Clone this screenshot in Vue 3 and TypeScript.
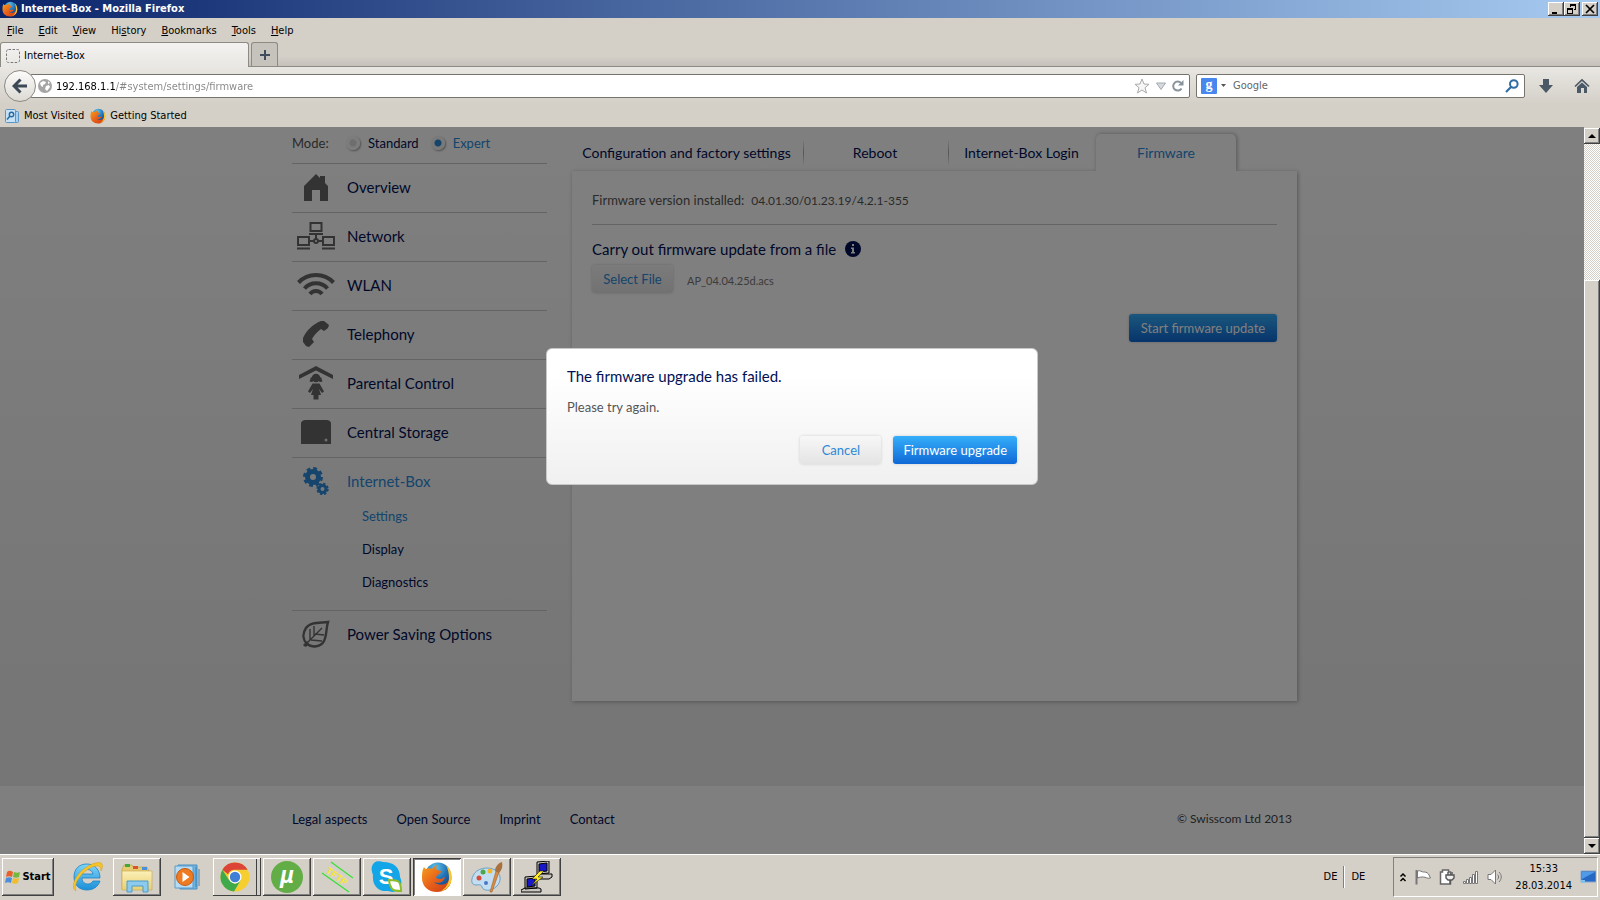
<script setup lang="ts">
import { ref } from 'vue'

interface NavItem { label: string; icon: string; active?: boolean; children?: string[] }

const menus = ['File', 'Edit', 'View', 'History', 'Bookmarks', 'Tools', 'Help']
const keyIndex: Record<string, number> = { History: 2 }
const nav: NavItem[] = [
  { label: 'Overview', icon: 'house' },
  { label: 'Network', icon: 'network' },
  { label: 'WLAN', icon: 'wifi' },
  { label: 'Telephony', icon: 'phone' },
  { label: 'Parental Control', icon: 'parental' },
  { label: 'Central Storage', icon: 'storage' },
  { label: 'Internet-Box', icon: 'gears', active: true, children: ['Settings', 'Display', 'Diagnostics'] },
  { label: 'Power Saving Options', icon: 'leaf' },
]
const tabs = ['Configuration and factory settings', 'Reboot', 'Internet-Box Login', 'Firmware']
const activeTab = ref('Firmware')
const mode = ref('Expert')
const url = ref('192.168.1.1/#system/settings/firmware')
const query = ref('')
const footerLinks = ['Legal aspects', 'Open Source', 'Imprint', 'Contact']
const apps = [
  { id: 'ie', label: 'Internet Explorer', state: 'flat' },
  { id: 'explorer', label: 'Windows Explorer', state: '' },
  { id: 'wmp', label: 'Media Player', state: 'flat' },
  { id: 'chrome', label: 'Chrome', state: 'stacked' },
  { id: 'utorrent', label: 'uTorrent', state: '' },
  { id: 'tftp', label: 'TFTP', state: '' },
  { id: 'skype', label: 'Skype', state: '' },
  { id: 'firefox', label: 'Firefox', state: 'pressed' },
  { id: 'paint', label: 'Paint', state: '' },
  { id: 'putty', label: 'PuTTY', state: '' },
]
</script>

<template>
  <div class="screen">
    <svg class="defs" aria-hidden="true">
      <defs>
        <linearGradient id="foxTail" x1="0" y1="0" x2="1" y2="1">
          <stop offset="0" stop-color="#f6a21d" /><stop offset=".5" stop-color="#e8601a" /><stop offset="1" stop-color="#c83a12" />
        </linearGradient>
        <radialGradient id="foxGlobe" cx=".4" cy=".2" r=".9">
          <stop offset="0" stop-color="#5cc4ea" /><stop offset=".5" stop-color="#2272b8" /><stop offset="1" stop-color="#123a78" />
        </radialGradient>
        <linearGradient id="ieBlue" x1="0" y1="0" x2="0" y2="1">
          <stop offset="0" stop-color="#7fd4f8" /><stop offset="1" stop-color="#1b8fd8" />
        </linearGradient>
        <linearGradient id="folder" x1="0" y1="0" x2="0" y2="1">
          <stop offset="0" stop-color="#fbf0b8" /><stop offset="1" stop-color="#e8cf72" />
        </linearGradient>
        <symbol id="fox" viewBox="0 0 32 32">
          <circle cx="17" cy="14.500" r="13" fill="url(#foxGlobe)" />
          <path d="M3 6c1 1 1 2 2 2 2-1 4-1 6 0 1-2 3-3 5-4-1 2-1 4 0 5l4 1c0 2-1 3-4 4l-1 3c3 2 6 1 9-1-1 5-6 7-11 5 4 4 12 4 15-2 1-3 1-8-1-11 3 3 4 8 3 12-1 7-7 11-14 11C7 31 1 25 1 17 1 13 1 9 3 6z" fill="url(#foxTail)" />
          <path d="M25 4c5 4 7 11 5 17-1 4-5 8-10 9 5-3 8-8 8-13 0-5-1-9-3-13z" fill="#fbc531" />
        </symbol>
      </defs>
    </svg>

    <header class="titlebar">
      <svg class="i16" aria-hidden="true"><use href="#fox" /></svg>
      <span class="title">Internet-Box - Mozilla Firefox</span>
      <div class="winbtns">
        <button aria-label="Minimize"><svg viewBox="0 0 10 10"><path d="M1 8h5v2H1z" /></svg></button>
        <button aria-label="Restore"><svg viewBox="0 0 10 10"><path d="M3 0h6v6H7V5h1V2H4v1H3zM0 4h6v6H0zM1 6v3h4V6z" fill-rule="evenodd" /></svg></button>
        <button class="close" aria-label="Close"><svg viewBox="0 0 10 10"><path d="M1 1l8 8M9 1L1 9" stroke="#000" stroke-width="1.700" /></svg></button>
      </div>
    </header>

    <nav class="menubar" aria-label="Menu">
      <button v-for="m in menus" :key="m">{{ m.slice(0, keyIndex[m] ?? 0) }}<u>{{ m[keyIndex[m] ?? 0] }}</u>{{ m.slice((keyIndex[m] ?? 0) + 1) }}</button>
    </nav>

    <div class="tabstrip">
      <button class="btab">
        <svg class="i14" viewBox="0 0 14 14" aria-hidden="true"><rect x=".5" y=".5" width="13" height="13" rx="2" fill="none" stroke="#777" stroke-dasharray="2.500 1.500" /></svg>
        <span>Internet-Box</span>
      </button>
      <button class="newtab" aria-label="New tab"><svg viewBox="0 0 10 10"><path d="M5 0v10M0 5h10" stroke="#3f4d5c" stroke-width="2" /></svg></button>
    </div>

    <div class="toolbar">
      <button class="back" aria-label="Back"><svg viewBox="0 0 16 16"><path d="M8.500 1.500L2 8l6.500 6.500M2 8h13" fill="none" stroke="#3c4856" stroke-width="3" /></svg></button>
      <div class="field address">
        <svg class="i14" viewBox="0 0 14 14" aria-hidden="true"><circle cx="7" cy="7" r="7" fill="#a5a5a5" /><path d="M2 4l3-2 3 1-1 2-2 1v2L3 7zM8 7l3-1 1 2-3 4-2-2zM10 2l2 2-2 1z" fill="#fff" /></svg>
        <input v-model="url" class="url" aria-label="Address" />
        <button aria-label="Bookmark"><svg class="i16" viewBox="0 0 16 16"><path d="M8 1l2 5 5 .3-4 3.400L12.500 15 8 12l-4.500 3L5 9.700 1 6.300 6 6z" fill="#f6f6f6" stroke="#aaa" /></svg></button>
        <button aria-label="History"><svg class="i10" viewBox="0 0 10 8"><path d="M.5 1h9L5 7.500z" fill="#d6d9de" stroke="#a4a9b2" /></svg></button>
        <button aria-label="Reload"><svg class="i12" viewBox="0 0 12 12"><path d="M9.500 8.500A4.500 4.500 0 1 1 9 3" fill="none" stroke="#8a929c" stroke-width="2" /><path d="M11.500 0v5.500H6z" fill="#8a929c" /></svg></button>
      </div>
      <div class="field search">
        <svg class="i16" viewBox="0 0 16 16" aria-hidden="true"><rect width="16" height="16" rx="1" fill="#4787ee" /><text x="8" y="11" class="g">g</text></svg>
        <svg class="caret" viewBox="0 0 5 3" aria-hidden="true"><path d="M0 0h5L2.500 3z" fill="#555" /></svg>
        <input v-model="query" placeholder="Google" aria-label="Search" />
        <button aria-label="Search"><svg class="i14" viewBox="0 0 14 14"><circle cx="8.800" cy="5" r="3.800" fill="none" stroke="#2d6ea5" stroke-width="2" /><path d="M6 8L1 13" stroke="#2d6ea5" stroke-width="2.200" /></svg></button>
      </div>
      <button class="tool" aria-label="Downloads"><svg class="i14" viewBox="0 0 14 14"><path d="M4 0h6v6h4l-7 8-7-8h4z" fill="#4b5866" /></svg></button>
      <button class="tool" aria-label="Home"><svg class="i16" viewBox="0 0 16 16"><path d="M1 8.500L8 2l7 6.500" fill="none" stroke="#4b5866" stroke-width="1.700" /><path d="M3 9l5-4.500L13 9v6h-3v-5H7v5H3z" fill="#4b5866" /></svg></button>
    </div>

    <nav class="bookmarks" aria-label="Bookmarks">
      <a href="#"><svg class="i16" viewBox="0 0 16 16"><rect x="3.500" y="3.500" width="11" height="11" rx="1" fill="#a9d0ee" stroke="#5a95c6" /><rect x="1.500" y="1.500" width="10" height="13" rx="1" fill="#c6e2f6" stroke="#5a95c6" /><circle cx="7.500" cy="6.500" r="2.200" fill="none" stroke="#2768a2" stroke-width="1.400" /><path d="M6 8l-3 3.500" stroke="#2768a2" stroke-width="1.500" /></svg>Most Visited</a>
      <a href="#"><svg class="i16"><use href="#fox" /></svg>Getting Started</a>
    </nav>

    <div class="viewport">
      <main class="page">
        <div class="container body">
          <aside class="sidebar">
            <div class="mode">
              <span>Mode:</span>
              <label v-for="m in ['Standard', 'Expert']" :key="m" :class="{ on: mode === m }"><input v-model="mode" type="radio" name="mode" :value="m" />{{ m }}</label>
            </div>
            <ul class="nav">
              <li v-for="n in nav" :key="n.label" :class="{ active: n.active }">
                <a href="#" class="row">
                  <span class="ico">
                    <svg v-if="n.icon === 'house'" width="26" height="28" viewBox="0 0 26 28"><path d="M1 13L13 1l4 4V3h5v7l3 3v15h-8V17H9v11H1z" /></svg>
                    <svg v-else-if="n.icon === 'network'" width="38" height="28" viewBox="0 0 38 28"><g fill="none" stroke="currentColor" stroke-width="2"><rect x="13.500" y="1" width="11" height="8" /><rect x="1" y="15" width="11" height="8" /><rect x="26" y="15" width="11" height="8" /><path d="M12 12h14M0 26.500h13M25 26.500h13M19 12v5M12 19h14" /></g><circle cx="19" cy="19" r="3" /><circle cx="19" cy="19" r="1" fill="#fff" /></svg>
                    <svg v-else-if="n.icon === 'wifi'" width="38" height="24" viewBox="0 0 38 24"><g fill="none" stroke="currentColor" stroke-width="4"><path d="M1.500 9.500C11-.5 27-.5 36.500 9.500" /><path d="M7.500 15.500c6-7 17-7 23 0" /><path d="M13 21c3-4 9-4 12 0" /></g></svg>
                    <svg v-else-if="n.icon === 'phone'" width="28" height="28" viewBox="0 0 28 28"><path d="M19 1l3 0 5 4-1 3-4 3-3-2C15 12 12 15 10 19l2 3-5 5-3-1-3-4 0-4C4 11 11 4 19 1z" /></svg>
                    <svg v-else-if="n.icon === 'parental'" width="36" height="34" viewBox="0 0 36 34"><path d="M1 9L18 0l17 9v4L18 4.500 1 13z" /><circle cx="18" cy="12" r="4.300" /><path d="M13 11l-1.500 4.500L14 16l3-2zM23 11l1.500 4.500L22 16l-3-2zM14.500 17.500h7l4.500 8-2 1.500-3-4 2 6h-2.500v4.500h-5V29H13l2-6-3 4-2-1.500z" /></svg>
                    <svg v-else-if="n.icon === 'storage'" width="30" height="26" viewBox="0 0 30 26"><path d="M0 5C0 2 2 1 5 1h20c3 0 5 1 5 4v20H0z" /><circle cx="25" cy="21" r="1.500" fill="#ddd" /></svg>
                    <svg v-else-if="n.icon === 'gears'" width="26" height="28" viewBox="0 0 26 28"><g fill="none" stroke="currentColor"><circle cx="10" cy="10" r="5.500" stroke-width="5" /><circle cx="10" cy="10" r="8.700" stroke-width="2.500" stroke-dasharray="3.830 3" /><circle cx="19.500" cy="22" r="3.500" stroke-width="3" /><circle cx="19.500" cy="22" r="5.300" stroke-width="1.800" stroke-dasharray="2.360 1.800" /></g></svg>
                    <svg v-else width="28" height="28" viewBox="0 0 28 28"><g fill="none" stroke="currentColor"><path d="M26 2C17 3 8 2 4 8c-4 6-3 12 1 16 5 4 14 3 17-3 3-6 2-13 4-19z" stroke-width="2.400" /><path d="M2 26L5 23 20 8M8 20V9M12 16V6M9 20l11 1M13 14l9 1" stroke-width="1.400" /></g><path d="M1 25l4-4 2 3-3 3z" /></svg>
                  </span>
                  <span>{{ n.label }}</span>
                </a>
                <ul v-if="n.children" class="sub">
                  <li v-for="(c, i) in n.children" :key="c"><a href="#" :class="{ on: i === 0 }">{{ c }}</a></li>
                </ul>
              </li>
            </ul>
          </aside>

          <section class="content">
            <div class="tabs" role="tablist">
              <button v-for="t in tabs" :key="t" role="tab" :aria-selected="t === activeTab" :class="{ active: t === activeTab }" @click="activeTab = t">{{ t }}</button>
            </div>
            <div class="panel">
              <p class="version">Firmware version installed:<span>04.01.30/01.23.19/4.2.1-355</span></p>
              <h2>Carry out firmware update from a file
                <svg width="16" height="16" viewBox="0 0 16 16"><circle cx="8" cy="8" r="8" fill="#001155" /><path d="M7 3h2v2H7zM6 6.500h3V11h1v1.500H6V11h1V8H6z" fill="#fff" /></svg>
              </h2>
              <div class="file"><button class="btn">Select File</button><span>AP_04.04.25d.acs</span></div>
              <div class="actions"><button class="btn primary">Start firmware update</button></div>
            </div>
          </section>
        </div>
        <footer class="foot">
          <div class="container">
            <a v-for="f in footerLinks" :key="f" href="#">{{ f }}</a>
            <span>© Swisscom Ltd 2013</span>
          </div>
        </footer>
      </main>

      <div class="overlay">
        <div class="dialog" role="dialog" aria-labelledby="dlg">
          <h1 id="dlg">The firmware upgrade has failed.</h1>
          <p>Please try again.</p>
          <div class="buttons"><button class="btn">Cancel</button><button class="btn primary">Firmware upgrade</button></div>
        </div>
      </div>

      <div class="scroll">
        <button aria-label="Scroll up"><svg viewBox="0 0 8 4"><path d="M4 0l4 4H0z" /></svg></button>
        <div class="track"><div class="thumb"></div></div>
        <button aria-label="Scroll down"><svg viewBox="0 0 8 4"><path d="M0 0h8L4 4z" /></svg></button>
      </div>
    </div>

    <footer class="taskbar">
      <button class="start">
        <svg class="i16" viewBox="0 0 16 16" aria-hidden="true"><path d="M2 3c2-2 4-1 6 0L7 8C5 7 3 7 1 8z" fill="#e8602c" /><path d="M9 3c2 1 4 1 6 0l-1 5c-2 1-4 1-6 0z" fill="#74b83e" /><path d="M1 9c2-1 4-1 6 0l-1 5c-2-1-4-1-6 0z" fill="#4a8fdc" /><path d="M8 9c2 1 4 1 6 0l-1 5c-2 1-4 1-6 0z" fill="#f2bd2c" /></svg>Start
      </button>
      <div class="apps">
        <button v-for="a in apps" :key="a.id" :class="a.state" :aria-label="a.label">
          <svg v-if="a.id === 'ie'" viewBox="0 0 32 32"><path d="M16 3c8 0 13 6 13 14H11c0 4 3 6 6 6 2 0 4-1 5-3h7c-2 6-7 9-13 9-8 0-13-5-13-13S8 3 16 3zm-5 10h11c-1-6-10-6-11 0z" fill="url(#ieBlue)" stroke="#1c82c4" stroke-width=".8" /><path d="M5 30C-1 27 4 14 14 7 21 2 29 0 31 3c1 2 0 5-1 7 0-3-1-5-3-5C19 4 7 15 5 23c-1 3-1 5 0 7z" fill="#f7c52b" stroke="#d49a10" stroke-width=".5" /></svg>
          <svg v-else-if="a.id === 'explorer'" viewBox="0 0 32 32"><path d="M3 4h8l1 2h14l2 4v18H1V8z" fill="#e6cb70" stroke="#b99a3c" stroke-width=".6" /><path d="M4 3h5v3H4z" fill="#3fa83f" /><path d="M12 5h5v3h-5z" fill="#d9532c" /><path d="M21 6h5v3h-5z" fill="#4a8fdc" /><path d="M1 10h30v19H1z" fill="url(#folder)" stroke="#c6a64a" stroke-width=".6" /><path d="M6 31V20h21v11h-5v-6H11v6z" fill="#8ccbee" stroke="#4a9ccc" /></svg>
          <svg v-else-if="a.id === 'wmp'" viewBox="0 0 32 32"><path d="M7 4h19v24H9z" fill="#6fb2df" stroke="#4a8fc2" /><path d="M4 5h18v22H4z" fill="#b5dcf4" stroke="#5a9cc9" /><path d="M25 6v20M28 8v17" stroke="#3d86bd" /><circle cx="14" cy="16" r="8.500" fill="#ee7a22" stroke="#c95a10" /><path d="M11.500 11l7 5-7 5z" fill="#fff" /></svg>
          <svg v-else-if="a.id === 'chrome'" viewBox="0 0 32 32"><circle cx="16" cy="16" r="14.500" fill="#f6ce2f" /><path d="M3.400 8.700A14.500 14.500 0 0 1 28.600 8.700H16a7 7 0 0 0-7 4.500z" fill="#db4437" /><path d="M3.400 8.700A14.500 14.500 0 0 0 15 30.500l6.500-11-5.500 3.500-6-4z" fill="#3faa4c" /><circle cx="16" cy="16" r="6.500" fill="#fff" /><circle cx="16" cy="16" r="5.200" fill="#3f7fd6" /></svg>
          <svg v-else-if="a.id === 'utorrent'" viewBox="0 0 32 32"><circle cx="16" cy="16" r="16" fill="#62ad45" /><text x="16" y="22" class="mu">µ</text></svg>
          <svg v-else-if="a.id === 'tftp'" viewBox="0 0 32 32"><path d="M10 1l22 16M1 12l27 19" stroke="#3be03b" stroke-width="1.400" /><text x="4" y="11" transform="rotate(36 4 11)" class="tftp">TFTP</text></svg>
          <svg v-else-if="a.id === 'skype'" viewBox="0 0 32 32"><path d="M3 2c4-3 7-1 9-1 10 0 17 5 17 15 2 4 2 8-1 12-4 4-8 3-11 2C7 31 1 24 2 14 0 9 0 5 3 2z" fill="#12a5e8" /><text x="15" y="23" class="sk">S</text><path d="M18 19c5 0 8 0 10 2 2 3 2 5 2 9-4 0-7 0-9-2-2-3-3-5-3-9z" fill="#fff" stroke="#8cbd28" stroke-width="2" /></svg>
          <svg v-else-if="a.id === 'firefox'" viewBox="0 0 32 32"><use href="#fox" /></svg>
          <svg v-else-if="a.id === 'paint'" viewBox="0 0 32 32"><path d="M2 15C5 7 17 5 24 9c7 4 6 12 2 16-6 6-14 5-15 1-1-3-3-2-6-2-5 0-5-5-3-9z" fill="#c4def1" stroke="#6a9fc7" /><circle cx="8" cy="17" r="2.500" fill="#d94a3a" /><circle cx="12" cy="11" r="2.500" fill="#4aa84a" /><circle cx="19" cy="10" r="2.500" fill="#f0b62c" /><circle cx="15" cy="22" r="2" fill="#4a78c8" /><path d="M19 31l6-21 3 1-7 20z" fill="#d98b42" stroke="#a3602a" stroke-width=".6" /><path d="M24 10c0-4 3-8 7-9 1 4 0 8-3 11z" fill="#a9713f" /></svg>
          <svg v-else viewBox="0 0 32 32"><g stroke="#000"><path d="M16 1l12-1v12l-12 1zM13 16l4-3h14v3l-3 2H13z" fill="#c9c6c0" /><path d="M4 16l12-1v12L4 28zM0 29l4-2h14l2 1v3H0z" fill="#c9c6c0" /><path d="M18 3l8-1v8l-8 1zM6 18l8-1v8l-8 1z" fill="#1818c8" /><path d="M19 10l-8 8h5l-6 7 12-9h-5l6-6z" fill="#ffee22" stroke-width=".5" /></g></svg>
        </button>
      </div>
      <div class="lang"><span>DE</span><i></i><span>DE</span></div>
      <div class="tray">
        <svg width="8" height="10" viewBox="0 0 8 10"><path d="M1.500 4.500L4 2l2.500 2.500M1.500 9L4 6.500 6.500 9" fill="none" stroke="#000" stroke-width="1.500" /></svg>
        <svg class="i16" viewBox="0 0 16 16"><path d="M1.500 1v14.500" stroke="#777" stroke-width="2" /><path d="M2.500 2c3-1 4 1 6 1s3 0 5 2l2 4c-3 1-5-1-7-1s-4 0-6 1z" fill="#fff" stroke="#777" /></svg>
        <svg class="i16" viewBox="0 0 16 16"><path d="M1.500 3h2V1h6v2h2v12h-10z" fill="#fff" stroke="#666" stroke-width="1.500" /><path d="M9 3v3M13 3v3M7 6h8v3l-2 2H9L7 9zM11 11v4" fill="#eee" stroke="#555" stroke-width="1.400" /></svg>
        <svg class="i16" viewBox="0 0 16 16"><g fill="#fff" stroke="#777"><path d="M.5 12.500h2v2h-2zM3.500 10.500h2v4h-2zM6.500 8.500h2v6h-2zM9.500 5.500h2v9h-2zM12.500 2.500h2v12h-2z" /></g></svg>
        <svg class="i16" viewBox="0 0 16 16"><path d="M1 5.500h3L8.500 1v14L4 10.500H1z" fill="#fff" stroke="#777" /><path d="M10.500 5.500c1.500 1.500 1.500 3.500 0 5M12 3c3 3 3 7 0 10" fill="none" stroke="#777" /></svg>
        <div class="clock"><span>15:33</span><span>28.03.2014</span></div>
        <svg class="i16" viewBox="0 0 16 16"><path d="M1 2h15v11H1z" fill="#2668c4" stroke="#89a8cc" /><path d="M2 3h13L2 10z" fill="#4f9be8" /><path d="M1 11h4v3H1z" fill="#7fc4f0" /></svg>
      </div>
    </footer>
  </div>
</template>

<style>
body { margin: 0; }
</style>

<style scoped>
* { box-sizing: border-box; }
button { font: inherit; color: inherit; border: 0; padding: 0; background: none; }
input { font: inherit; }
ul { list-style: none; margin: 0; padding: 0; }
a { color: inherit; text-decoration: none; }
svg { flex: none; display: block; }
.defs { position: absolute; width: 0; height: 0; }
.i16 { width: 16px; height: 16px; }
.i14 { width: 14px; height: 14px; }
.i12 { width: 12px; height: 12px; }
.i10 { width: 10px; height: 8px; }

.screen { min-height: 100vh; display: flex; flex-direction: column; overflow: hidden; background: #d4d0c8; color: #000; font: 11px/14px Tahoma, "DejaVu Sans Condensed", "Noto Sans", sans-serif; }
.titlebar { height: 18px; display: flex; align-items: center; gap: 3px; padding: 0 2px; background: linear-gradient(90deg, #0a246a, #a6caf0); color: #fff; font-weight: bold; }
.title { flex: 1; }
.winbtns { display: flex; }
.winbtns button { width: 16px; height: 14px; display: grid; place-items: center; }
.winbtns svg { width: 10px; height: 10px; }
.winbtns .close { margin-left: 2px; }
.winbtns button, .scroll button, .thumb, .start, .apps button { background: #d4d0c8; box-shadow: inset -1px -1px #404040, inset 1px 1px #fff, inset -2px -2px #808080; }

.menubar { height: 24px; display: flex; align-items: center; gap: 15px; padding: 1px 7px 0; }
.tabstrip { height: 25px; display: flex; gap: 2px; align-items: stretch; border-bottom: 1px solid #8d8a84; background: linear-gradient(#d4d0c8 60%, #c5c1ba); }
.btab { width: 249px; margin-bottom: -1px; display: flex; align-items: center; gap: 4px; padding: 2px 5px 0; background: linear-gradient(#f3f2f0, #e9e7e3); border: 1px solid #8d8a84; border-bottom: 0; border-radius: 3px 3px 0 0; }
.newtab { width: 27px; display: grid; place-items: center; background: #c6c3bc; border: 1px solid #8d8a84; border-bottom: 0; border-radius: 3px 3px 0 0; }
.newtab svg { width: 10px; height: 10px; }
.toolbar { height: 37px; display: flex; align-items: center; padding: 0 10px 0 4px; background: linear-gradient(#e9e7e3, #d4d0c8); }
.back { width: 32px; height: 32px; z-index: 1; display: grid; place-items: center; border-radius: 50%; background: linear-gradient(#fbfbfa, #dddad4); border: 1px solid #8d8a84; }
.back svg { width: 16px; height: 16px; }
.field { height: 24px; display: flex; align-items: center; background: #fff; border: 1px solid #77746e; border-radius: 2px; }
.field input { flex: 1; min-width: 0; padding: 1px 0 0; border: 0; outline: 0; }
.field input::placeholder { color: #666; }
.address { flex: 1; margin-left: -6px; padding: 0 5px 0 7px; gap: 6px; }
.address .i14 { margin-right: -2px; }
.field .url { height: 19px; color: transparent; background: linear-gradient(90deg, #000 60px, #858585 60px); -webkit-background-clip: text; background-clip: text; }
.search { width: 329px; margin: 0 14px 0 6px; padding: 0 5px 0 4px; gap: 4px; }
.search input { margin-left: 3px; }
.caret { width: 5px; height: 3px; }
.g { font: bold 14px "Liberation Serif", serif; fill: #fff; text-anchor: middle; }
.tool + .tool { margin-left: 21px; }
.bookmarks { height: 23px; display: flex; align-items: center; gap: 6px; padding: 0 4px; }
.bookmarks a { display: flex; align-items: center; gap: 4px; }

.viewport { flex: 1; display: grid; grid-template-columns: minmax(0, 1fr) 16px; font-family: Lato, "Open Sans", sans-serif; color: #001155; }
.page, .overlay { grid-area: 1 / 1; }
.page { display: flex; flex-direction: column; background: linear-gradient(#fff, #ececec 80%); }
.container { width: 1000px; max-width: 100%; margin: 0 auto; }
.body { flex: 1; display: flex; gap: 25px; }
.sidebar { width: 255px; }
.mode { height: 36px; display: flex; align-items: center; padding-bottom: 4px; font-size: 13px; color: #555; }
.mode span { width: 54px; }
.mode label { display: flex; align-items: center; gap: 8px; margin-right: 12px; color: #001155; }
.mode label.on { color: #2b88d8; }
.mode input { appearance: none; width: 14px; height: 14px; margin: 0; border-radius: 50%; background: radial-gradient(#ddd 3px, #f8f8f8 4px); box-shadow: 1px 1px 2px #999; }
.mode input:checked { background: radial-gradient(#2b88d8 3px, #f2f2f2 4px); }
.nav > li { border-top: 1px solid #c9c9c9; }
.row { height: 48px; display: flex; align-items: center; gap: 7px; padding-bottom: 2px; font-size: 15px; }
.ico { width: 48px; display: flex; justify-content: center; color: #666; }
.ico svg { fill: currentColor; }
.active .row, .active .ico, .sub .on { color: #2b88d8; }
.sub { margin-top: -6px; padding: 0 0 11px 70px; font-size: 13px; line-height: 33px; }
.content { flex: 1; margin-right: -5px; padding-top: 7px; }
.tabs { display: grid; grid-template-columns: 232fr 145fr 147fr 140fr 61fr; height: 37px; font-size: 14px; }
.tabs button { padding-right: 2px; border-right: 1px solid; border-image: linear-gradient(transparent 15%, #aaa 50%, transparent 85%) 1; }
.tabs button:nth-child(3) { border: 0; }
.tabs .active { z-index: 1; padding: 0; border: 0; background: #fff; color: #2b88d8; border-radius: 5px 5px 0 0; box-shadow: 1px 0 4px #aaa; clip-path: inset(-5px -5px 0 -5px); }
.panel { min-height: 530px; padding: 0 20px; background: #fff; box-shadow: 1px 1px 4px #aaa; }
.version { height: 54px; margin: 0; padding-top: 4px; font-size: 13px; line-height: 50px; color: #555; border-bottom: 1px solid #c9c9c9; }
.version span { margin-left: 7px; font-size: 12px; }
h2 { height: 40px; margin: 0; padding-top: 8px; display: flex; align-items: center; gap: 9px; font-size: 15px; font-weight: normal; }
.btn { min-width: 81px; height: 28px; padding: 0 10px 1px; border-radius: 3px; font-size: 13px; color: #2b88d8; background: linear-gradient(#f7f7f7, #e4e4e4); box-shadow: 0 0 3px #ccc; }
.btn.primary { color: #fff; background: linear-gradient(#35aefa, #0f69d6); }
.file { display: flex; align-items: center; gap: 14px; color: #777; }
.file span { padding-top: 3px; }
.actions { display: flex; justify-content: flex-end; padding-top: 21px; }
.actions .btn { min-width: 148px; }
.foot { height: 68px; display: flex; align-items: center; padding-bottom: 2px; background: #fff; font-size: 13px; }
.foot .container { display: flex; gap: 29px; }
.foot span { margin-left: auto; font-size: 12px; color: #444; }

.overlay { z-index: 2; padding-top: 221px; background: rgba(0, 0, 0, .5); }
.dialog { width: 492px; height: 137px; margin: 0 auto; padding: 19px 20px; border: 1px solid #c8c8c8; border-radius: 6px; background: linear-gradient(#fff 20%, #f0f0f0); }
.dialog h1 { margin: 0; font-size: 15px; line-height: 16px; font-weight: normal; }
.dialog p { margin: 14px 0 20px; font-size: 13px; line-height: 18px; color: #555; }
.buttons { display: flex; justify-content: flex-end; gap: 12px; }

.scroll { display: flex; flex-direction: column; padding-top: 1px; }
.scroll button { height: 16px; display: grid; place-items: center; }
.scroll svg { width: 8px; height: 4px; }
.track { flex: 1; padding-top: 136px; background: repeating-conic-gradient(#fff 0 25%, #d4d0c8 0 50%) 0 0 / 2px 2px; display: flex; }
.thumb { flex: 1; }

.taskbar { height: 46px; display: flex; align-items: center; gap: 4px; padding: 0 2px 1px; border-top: 1px solid #fff; }
.start { width: 52px; height: 38px; display: flex; align-items: center; justify-content: center; gap: 1px; font-size: 11px; font-weight: bold; }
.apps { flex: 1; display: flex; gap: 2px; padding-left: 5px; }
.apps button { width: 48px; height: 38px; display: grid; place-items: center; }
.apps svg { width: 32px; height: 32px; }
.apps .flat { box-shadow: none; background: none; }
.apps .stacked { padding-right: 4px; box-shadow: inset -1px -1px #404040, inset 1px 1px #fff, inset -4px 0 #d4d0c8, inset -5px 0 #404040; }
.apps .pressed { background: #fff; box-shadow: inset 1px 1px #404040, inset -1px -1px #fff, inset 2px 2px #808080; }
.mu { font: italic bold 24px "Liberation Sans", sans-serif; fill: #fff; text-anchor: middle; }
.tftp { font: bold 10px "Liberation Mono", monospace; fill: #f5e82a; }
.sk { font: bold 22px "Liberation Sans", sans-serif; fill: #fff; text-anchor: middle; }
.lang { display: flex; align-items: center; gap: 6px; margin-right: 24px; }
.lang i { width: 2px; height: 22px; border-left: 1px solid #808080; border-right: 1px solid #fff; }
.tray { height: 40px; display: flex; align-items: center; gap: 8px; padding: 0 1px 0 5px; border: 1px solid; border-color: #808080 #fff #fff #808080; }
.clock { display: flex; flex-direction: column; text-align: center; line-height: 17px; margin-left: 4px; }
</style>
